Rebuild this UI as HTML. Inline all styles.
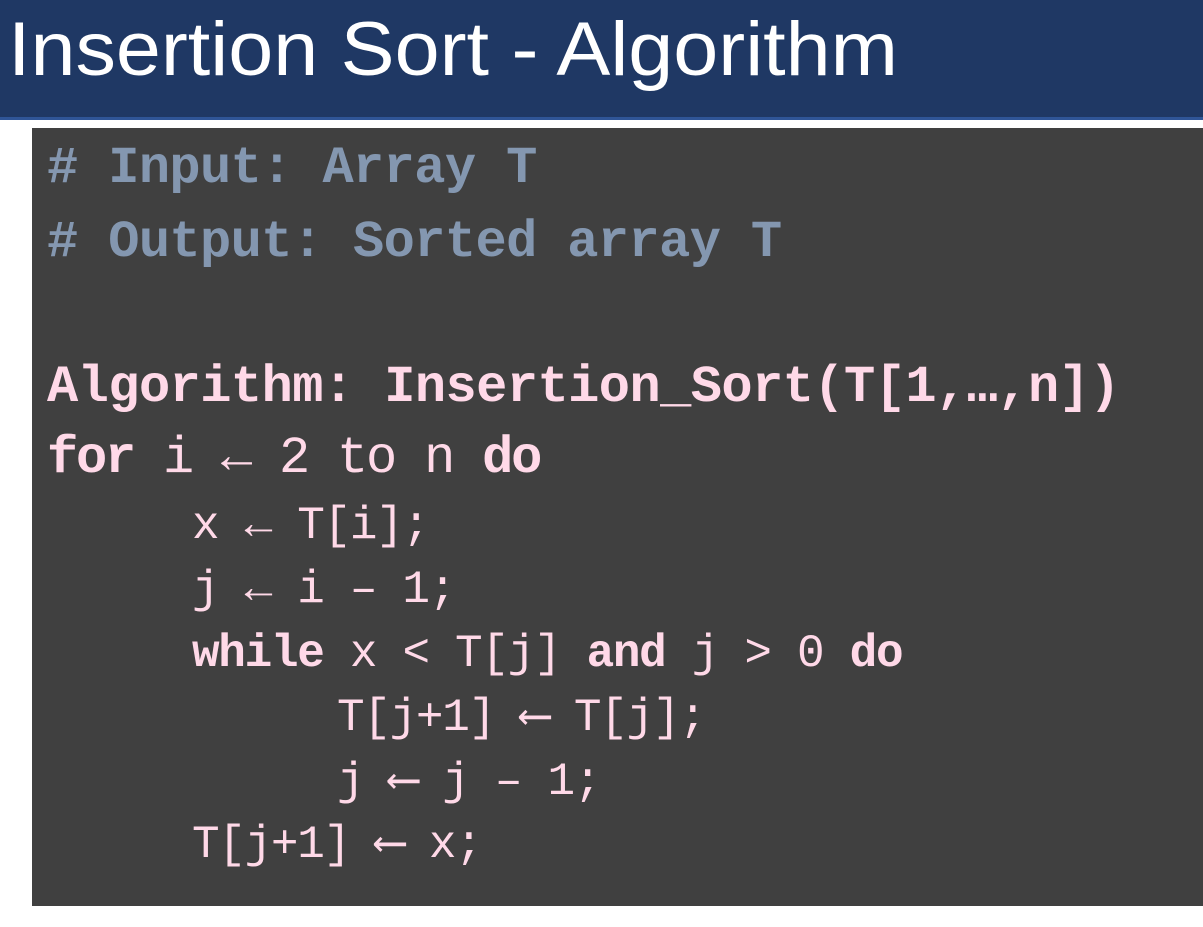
<!DOCTYPE html>
<html><head><meta charset="utf-8"><style>
html,body{margin:0;padding:0;background:#fff;width:1203px;height:927px;overflow:hidden;position:relative}
.bar{position:absolute;left:0;top:0;width:1203px;height:117px;background:#1F3864;border-bottom:3px solid #2F5597}
.box{position:absolute;left:32px;top:128px;width:1171px;height:778px;background:#404040}
.l{position:absolute;left:47px;font-family:"Liberation Mono",monospace;font-size:52px;letter-spacing:-2.2px;white-space:pre;color:#FFD9E8;line-height:1}
.s{font-size:46px;letter-spacing:-1.3px}
.c{color:#8497B0;font-weight:bold;letter-spacing:-0.6px}
b{font-weight:bold}
</style></head><body>
<div class="bar"></div>
<svg style="position:absolute;left:0;top:0" width="1203" height="120"><text x="8" y="75" fill="#fff" font-family="Liberation Sans, sans-serif" font-size="76" textLength="890" lengthAdjust="spacingAndGlyphs">Insertion Sort - Algorithm</text></svg>
<div class="box"></div>
<div class="l c" style="top:143px"># Input: Array T</div>
<div class="l c" style="top:217px"># Output: Sorted array T</div>
<div class="l" style="top:362px;letter-spacing:-0.55px"><b>Algorithm: Insertion_Sort(T[1,…,n])</b></div>
<div class="l" style="top:433px"><b>for</b> i ← 2 to n <b>do</b></div>
<div class="l s" style="top:503px;left:192px">x ← T[i];</div>
<div class="l s" style="top:567px;left:192px">j ← i – 1;</div>
<div class="l s" style="top:631px;left:192px"><b>while</b> x &lt; T[j] <b>and</b> j &gt; 0 <b>do</b></div>
<div class="l s" style="top:695px;left:337px">T[j+1] ⟵ T[j];</div>
<div class="l s" style="top:759px;left:337px">j ⟵ j – 1;</div>
<div class="l s" style="top:822px;left:192px">T[j+1] ⟵ x;</div>
</body></html>
